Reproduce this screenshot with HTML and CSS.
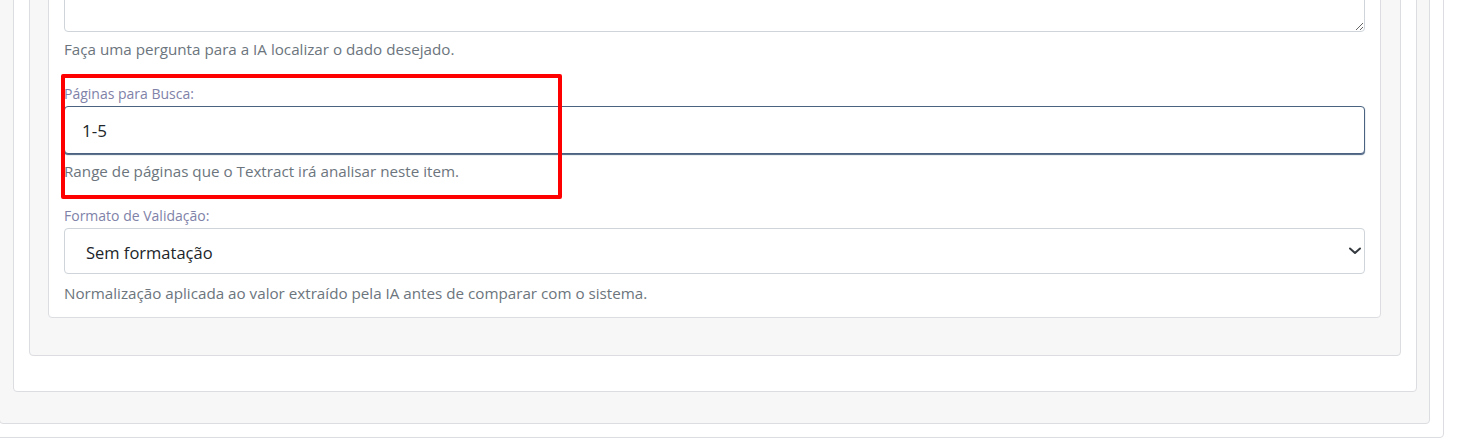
FILE: index.html
```html
<!DOCTYPE html>
<html lang="pt-BR">
<head>
<meta charset="utf-8">
<title>Configuração de item</title>
<link rel="stylesheet" href="styles.css">
</head>
<body>
<div class="shell">
  <div class="panel">
    <div class="section">
      <div class="subsection">
        <div class="card">
          <div class="field field-first">
            <textarea class="control textarea"></textarea>
            <div class="help help-first">Faça uma pergunta para a IA localizar o dado desejado.</div>
          </div>
          <div class="field field-pages">
            <label class="label" for="pages">Páginas para Busca:</label>
            <input id="pages" class="control input" type="text" value="1-5">
            <div class="help help-pages">Range de páginas que o Textract irá analisar neste item.</div>
            <div class="highlight"></div>
          </div>
          <div class="field">
            <label class="label" for="format">Formato de Validação:</label>
            <div class="select-wrap">
              <select id="format" class="control select">
                <option>Sem formatação</option>
              </select>
              <svg class="chevron" width="12" height="8" viewBox="0 0 12 8" aria-hidden="true"><path d="M1 1.5l5 4.5 5-4.5" fill="none" stroke="#343a40" stroke-width="2" stroke-linecap="round" stroke-linejoin="round"/></svg>
            </div>
            <div class="help help-format">Normalização aplicada ao valor extraído pela IA antes de comparar com o sistema.</div>
          </div>
        </div>
      </div>
    </div>
  </div>
</div>
</body>
</html>
```
FILE: styles.css
```css
* { box-sizing: border-box; }
html, body { margin: 0; padding: 0; background: #fff; overflow: hidden; }
body {
  font-family: "Segoe UI", "Open Sans", "Noto Sans", sans-serif;
  color: #212529;
}
.shell {
  margin: -100px 0 0 -15px;
  width: 1459px;
  background: #fff;
  border: 1px solid #dcdde0;
  border-radius: 4px;
  padding: 0 13px 13px 13px;
}
.panel {
  background: #f7f7f7;
  border: 1px solid #dcdde0;
  border-radius: 4px;
  padding: 0 12px 31px 13px;
}
.section {
  background: #fff;
  border: 1px solid #dcdde0;
  border-radius: 4px;
  padding: 0 15px 35px 15px;
}
.subsection {
  background: #f7f7f7;
  border: 1px solid #dcdde0;
  border-radius: 4px;
  padding: 0 19px 37px 18px;
}
.card {
  background: #fff;
  border: 1px solid #dcdde0;
  border-radius: 4px;
  padding: 0 15px 14px 15px;
}
.field { position: relative; margin-top: 26px; }
.field-first { margin-top: 0; }
.label {
  display: block;
  font-size: 14px;
  line-height: 18px;
  color: #8082a8;
  margin-bottom: 3px;
}
.control {
  display: block;
  width: 100%;
  font-family: inherit;
  color: #212529;
  background: #fff;
  border: 1px solid #ced4da;
  border-radius: 4px;
}
.textarea { height: 127px; resize: vertical; }
.input {
  height: 48px;
  font-size: 17px;
  padding: 0 17px;
  border-color: #4b6381;
  box-shadow: 0 1px 1px #4b6381;
  outline: none;
}
.select-wrap { position: relative; }
.select {
  height: 46px;
  font-size: 16.5px;
  padding: 3px 40px 0 21px;
  appearance: none;
  -webkit-appearance: none;
}
.chevron { position: absolute; top: 19px; right: 4px; }
.help {
  font-size: 15.2px;
  line-height: 20px;
  color: #6c757d;
  margin-top: 7px;
}
.help-format { margin-top: 9px; }
.highlight {
  position: absolute;
  left: -3px;
  top: -11px;
  width: 501px;
  height: 125px;
  border: 4px solid #ff0000;
  border-radius: 2px;
  pointer-events: none;
}
```
